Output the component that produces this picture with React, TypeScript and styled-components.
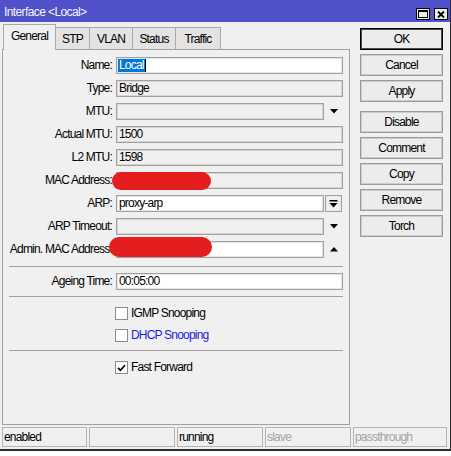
import React from "react";
import styled, { createGlobalStyle } from "styled-components";

const GlobalStyle = createGlobalStyle`
  html, body { margin: 0; padding: 0; background: #ffffff; }
  body {
    font-family: "Liberation Sans", Arial, sans-serif;
    font-size: 12px;
    letter-spacing: -0.8px;
    color: #000;
  }
  * { box-sizing: border-box; }
`;

const Window = styled.div`
  width: 451px;
  height: 451px;
  background: #f0f0f0;
  border-right: 1px solid #2e2e2e;
  border-bottom: 2px solid #2e2e2e;
  display: flex;
  flex-direction: column;
`;

const TitleBar = styled.div`
  height: 22px;
  flex: none;
  background: #5050c8;
  color: #f4f4ff;
  display: flex;
  align-items: center;
  gap: 4px;
  padding: 2px 2px 0 4px;
`;

const TitleText = styled.div`
  flex: 1;
  line-height: 14px;
  white-space: nowrap;
  letter-spacing: -0.6px;
`;

const TitleButton = styled.div`
  width: 14px;
  height: 12px;
  border: 1px solid #000;
  background: #ececec;
  align-self: flex-end;
  margin-bottom: 2px;
  display: flex;
  align-items: center;
  justify-content: center;
`;

const Body = styled.div`
  display: flex;
  flex: none;
  height: 403px;
  padding-left: 2px;
  gap: 10px;
`;

const LeftArea = styled.div`
  width: 348px;
  display: flex;
  flex-direction: column;
`;

const TabStrip = styled.div`
  height: 27px;
  flex: none;
  display: flex;
  align-items: flex-end;
  padding-left: 1px;
`;

const Tab = styled.div<{ $active?: boolean; $w: number }>`
  width: ${(p) => p.$w}px;
  height: ${(p) => (p.$active ? 26 : 22)}px;
  margin-right: -1px;
  margin-bottom: ${(p) => (p.$active ? -1 : 0)}px;
  position: relative;
  z-index: ${(p) => (p.$active ? 2 : 1)};
  background: ${(p) => (p.$active ? "#f0f0f0" : "#e3e3e3")};
  border: 1px solid #a9a9a9;
  border-bottom: none;
  text-align: center;
  padding-top: 4px;
  line-height: 14px;
  white-space: nowrap;
`;

const Panel = styled.div`
  height: 376px;
  flex: none;
  border: 1px solid #a0a0a0;
  padding: 7px 6px 0 0;
  display: flex;
  flex-direction: column;
`;

const FormRow = styled.div`
  position: relative;
  display: grid;
  grid-template-columns: 109px 1fr;
  column-gap: 4px;
  height: 17px;
  margin-bottom: 6px;
  flex: none;
`;

const Label = styled.div`
  text-align: right;
  line-height: 17px;
  white-space: nowrap;
`;

const FieldGroup = styled.div`
  display: flex;
  gap: 1px;
  min-width: 0;
`;

const Field = styled.div<{ $editable?: boolean }>`
  flex: 1;
  min-width: 0;
  height: 17px;
  border: 1px solid #a0a0a0;
  box-shadow: inset 0 0 0 1px ${(p) => (p.$editable ? "#e6e6e6" : "#d6d6d6")};
  background: ${(p) => (p.$editable ? "#ffffff" : "#f0f0f0")};
  padding-left: 1px;
  display: flex;
  align-items: center;
  line-height: 13px;
  white-space: nowrap;
  overflow: hidden;
`;

const Value = styled.span<{ $selected?: boolean }>`
  padding: 0 1px;
  background: ${(p) => (p.$selected ? "#0078d7" : "transparent")};
  color: ${(p) => (p.$selected ? "#ffffff" : "#000000")};
`;

const Caret = styled.span`
  width: 1px;
  height: 13px;
  background: #000;
`;

const ArrowSlot = styled.div<{ $button?: boolean }>`
  width: 17px;
  height: 17px;
  margin-right: 1px;
  flex: none;
  display: flex;
  align-items: center;
  justify-content: center;
  border: ${(p) => (p.$button ? "1px solid #a0a0a0" : "none")};
  box-shadow: ${(p) => (p.$button ? "inset 0 0 0 1px #e8e8e8" : "none")};
  background: #f0f0f0;
`;

const Redaction = styled.div<{ $left: number; $top: number; $w: number; $h: number }>`
  position: absolute;
  left: ${(p) => p.$left}px;
  top: ${(p) => p.$top}px;
  width: ${(p) => p.$w}px;
  height: ${(p) => p.$h}px;
  background: #e41e1e;
  border-radius: 10px;
`;

const Separator = styled.div<{ $top: number; $bottom: number }>`
  height: 1px;
  flex: none;
  background: #a0a0a0;
  margin: ${(p) => p.$top}px 0 ${(p) => p.$bottom}px 6px;
`;

const CheckRow = styled.div<{ $mb: number }>`
  display: flex;
  align-items: center;
  height: 13px;
  flex: none;
  padding-left: 112px;
  gap: 3px;
  margin-bottom: ${(p) => p.$mb}px;
`;

const CheckBox = styled.div`
  width: 13px;
  height: 13px;
  flex: none;
  border: 1px solid #8c8c8c;
  background: #ffffff;
  display: flex;
  align-items: center;
  justify-content: center;
`;

const CheckLabel = styled.span<{ $link?: boolean }>`
  color: ${(p) => (p.$link ? "#1c1ce0" : "#000")};
  line-height: 13px;
  white-space: nowrap;
`;

const ButtonColumn = styled.div`
  width: 83px;
  padding-top: 6px;
  display: flex;
  flex-direction: column;
  gap: 4px;
`;

const Button = styled.div<{ $default?: boolean; $extra?: number }>`
  height: 22px;
  flex: none;
  border: 1px solid ${(p) => (p.$default ? "#000" : "#9a9a9a")};
  box-shadow: inset 0 0 0 1px ${(p) => (p.$default ? "#4a4a4a" : "#cdcdcd")};
  background: #ececec;
  display: flex;
  align-items: center;
  justify-content: center;
  line-height: 14px;
  margin-top: ${(p) => p.$extra ?? 0}px;
`;

const StatusBar = styled.div`
  height: 20px;
  flex: none;
  margin-top: 2px;
  display: flex;
  gap: 2px;
  padding-left: 2px;
`;

const StatusCell = styled.div<{ $w: number; $dim?: boolean }>`
  width: ${(p) => p.$w}px;
  height: 20px;
  border: 1px solid #b4b4b4;
  padding-left: 1px;
  line-height: 18px;
  white-space: nowrap;
  color: ${(p) => (p.$dim ? "#a3a3a3" : "#000")};
`;

const DownArrow = () => (
  <svg width="8" height="5" viewBox="0 0 8 5">
    <polygon points="0,0 8,0 4,4.5" fill="#000" />
  </svg>
);

const UpArrow = () => (
  <svg width="8" height="5" viewBox="0 0 8 5">
    <polygon points="0,4.5 8,4.5 4,0" fill="#000" />
  </svg>
);

const DropAllIcon = () => (
  <svg width="9" height="8" viewBox="0 0 9 8">
    <rect x="0.5" y="0" width="8" height="1.5" fill="#000" />
    <polygon points="0.5,3 8.5,3 4.5,7.5" fill="#000" />
  </svg>
);

const MaxIcon = () => (
  <svg width="10" height="8" viewBox="0 0 10 8">
    <rect x="0.5" y="0.5" width="9" height="7" fill="none" stroke="#000" />
    <rect x="0" y="0" width="10" height="2" fill="#000" />
  </svg>
);

const CloseIcon = () => (
  <svg width="8" height="7" viewBox="0 0 8 7">
    <path d="M1 0.5 L7 6.5 M7 0.5 L1 6.5" stroke="#000" strokeWidth="1.8" fill="none" />
  </svg>
);

const CheckMark = () => (
  <svg width="9" height="8" viewBox="0 0 9 8">
    <path d="M1 3.8 L3.4 6.3 L8 1.2" stroke="#000" strokeWidth="1.7" fill="none" />
  </svg>
);

type Row = {
  label: string;
  value?: string;
  editable?: boolean;
  arrow?: "down" | "up" | "all";
  selected?: boolean;
  redact?: { left: number; top: number; w: number; h: number };
};

const rows: Row[] = [
  { label: "Name:", value: "Local", editable: true, selected: true },
  { label: "Type:", value: "Bridge" },
  { label: "MTU:", arrow: "down" },
  { label: "Actual MTU:", value: "1500" },
  { label: "L2 MTU:", value: "1598" },
  { label: "MAC Address:", redact: { left: 109, top: 0, w: 99, h: 18 } },
  { label: "ARP:", value: "proxy-arp", editable: true, arrow: "all" },
  { label: "ARP Timeout:", arrow: "down" },
  { label: "Admin. MAC Address:", editable: true, arrow: "up", redact: { left: 106, top: -4, w: 103, h: 20 } },
];

const tabs = [
  { name: "General", w: 53, active: true },
  { name: "STP", w: 35 },
  { name: "VLAN", w: 44 },
  { name: "Status", w: 44 },
  { name: "Traffic", w: 46 },
];

const buttons = ["OK", "Cancel", "Apply", "Disable", "Comment", "Copy", "Remove", "Torch"];

const statuses = [
  { text: "enabled", w: 85 },
  { text: "", w: 86 },
  { text: "running", w: 86 },
  { text: "slave", w: 86, dim: true },
  { text: "passthrough", w: 94, dim: true },
];

function FormField({ row }: { row: Row }) {
  return (
    <FormRow>
      <Label>{row.label}</Label>
      <FieldGroup>
        <Field $editable={row.editable}>
          {row.value && <Value $selected={row.selected}>{row.value}</Value>}
          {row.selected && <Caret />}
        </Field>
        {row.arrow && (
          <ArrowSlot $button={row.arrow === "all"}>
            {row.arrow === "down" && <DownArrow />}
            {row.arrow === "up" && <UpArrow />}
            {row.arrow === "all" && <DropAllIcon />}
          </ArrowSlot>
        )}
      </FieldGroup>
      {row.redact && (
        <Redaction $left={row.redact.left} $top={row.redact.top} $w={row.redact.w} $h={row.redact.h} />
      )}
    </FormRow>
  );
}

export default function App() {
  return (
    <>
      <GlobalStyle />
      <Window>
        <TitleBar>
          <TitleText>Interface &lt;Local&gt;</TitleText>
          <TitleButton>
            <MaxIcon />
          </TitleButton>
          <TitleButton>
            <CloseIcon />
          </TitleButton>
        </TitleBar>
        <Body>
          <LeftArea>
            <TabStrip>
              {tabs.map((t) => (
                <Tab key={t.name} $w={t.w} $active={t.active}>
                  {t.name}
                </Tab>
              ))}
            </TabStrip>
            <Panel>
              {rows.map((r) => (
                <FormField key={r.label} row={r} />
              ))}
              <Separator $top={2} $bottom={6} />
              <FormField row={{ label: "Ageing Time:", value: "00:05:00", editable: true }} />
              <Separator $top={0} $bottom={10} />
              <CheckRow $mb={9}>
                <CheckBox />
                <CheckLabel>IGMP Snooping</CheckLabel>
              </CheckRow>
              <CheckRow $mb={8}>
                <CheckBox />
                <CheckLabel $link>DHCP Snooping</CheckLabel>
              </CheckRow>
              <Separator $top={0} $bottom={10} />
              <CheckRow $mb={0}>
                <CheckBox>
                  <CheckMark />
                </CheckBox>
                <CheckLabel>Fast Forward</CheckLabel>
              </CheckRow>
            </Panel>
          </LeftArea>
          <ButtonColumn>
            {buttons.map((b) => (
              <Button key={b} $default={b === "OK"} $extra={b === "Disable" ? 5 : 0}>
                {b}
              </Button>
            ))}
          </ButtonColumn>
        </Body>
        <StatusBar>
          {statuses.map((s, i) => (
            <StatusCell key={i} $w={s.w} $dim={s.dim}>
              {s.text}
            </StatusCell>
          ))}
        </StatusBar>
      </Window>
    </>
  );
}
